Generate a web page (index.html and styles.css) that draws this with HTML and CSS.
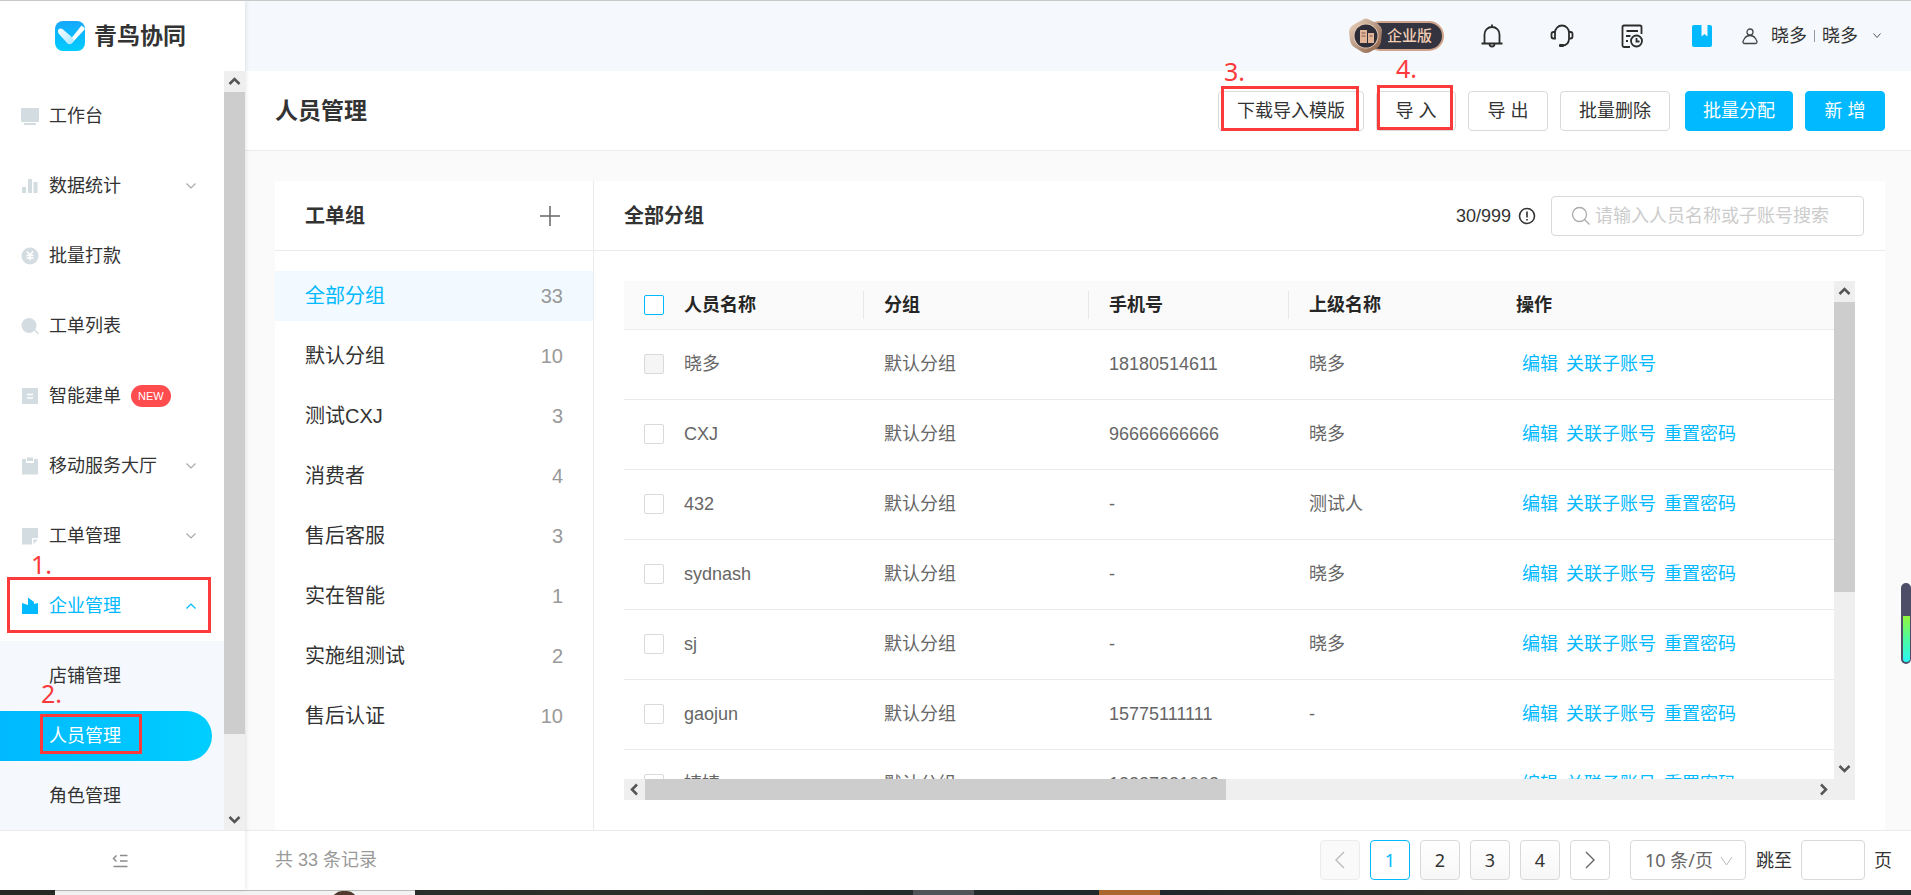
FILE: index.html
```html
<!DOCTYPE html>
<html lang="zh-CN">
<head>
<meta charset="utf-8">
<title>人员管理 - 青鸟协同</title>
<link rel="stylesheet" href="styles.css">
</head>
<body>
<div class="app">
  <aside class="sidebar">
    <div class="brand">
      <svg class="brand-logo" width="30" height="30" viewBox="0 0 30 30" aria-hidden="true">
        <defs>
          <linearGradient id="lg1" x1="0" y1="0" x2="0" y2="1"><stop offset="0" stop-color="#17a8fd"/><stop offset="1" stop-color="#00ccff"/></linearGradient>
          <linearGradient id="lg2" x1="0" y1="0" x2="1" y2="1"><stop offset="0" stop-color="#fff"/><stop offset="1" stop-color="#a8e6ff"/></linearGradient>
        </defs>
        <rect width="30" height="30" rx="8" fill="url(#lg1)"/>
        <path d="M13 21.500 26.500 4.500Q29 6 30 8L17.500 21.500Q15 24 13 21.500Z" fill="#fff"/>
        <path d="M3.500 8.500Q5.500 6.500 8 8.500L15 14.500 19 18.500 17 22Q15 24 12.500 22.500L4 13Q2 10.500 3.500 8.500Z" fill="url(#lg2)"/>
      </svg>
      <span class="brand-name">青鸟协同</span>
    </div>
    <div class="side-body">
      <nav class="menu">
        <a class="item" href="#"><svg class="mi" width="18" height="18" viewBox="0 0 18 18"><path d="M1 1h16q1 0 1 1v12q0 1-1 1H1q-1 0-1-1V2q0-1 1-1zM3 16h12v2H3z"/></svg><span>工作台</span></a>
        <a class="item" href="#"><svg class="mi" width="18" height="18" viewBox="0 0 18 18"><path d="M1 10h4v6H1zM7 2h4v14H7zM12.500 5h4v11h-4z"/></svg><span>数据统计</span><svg class="arrow" width="10" height="6" viewBox="0 0 10 6"><path d="M.5.5 5 5 9.500.5"/></svg></a>
        <a class="item" href="#"><svg class="mi" width="18" height="18" viewBox="0 0 18 18"><circle cx="9" cy="9" r="8.500"/><path class="cut" d="M6 4.500 9 8l3-3.500M5.500 8.500h7M5.500 11h7M9 8v5.500"/></svg><span>批量打款</span></a>
        <a class="item" href="#"><svg class="mi" width="18" height="18" viewBox="0 0 18 18"><circle cx="8" cy="8.500" r="7.500"/><path d="m13 13 1-1 4 4.500-1 1z"/></svg><span>工单列表</span></a>
        <a class="item" href="#"><svg class="mi" width="18" height="18" viewBox="0 0 18 18"><path d="M1 1h16v16H1z"/><path class="cut" d="M6 7.500h6M6 11h6"/></svg><span>智能建单</span><em class="tag">NEW</em></a>
        <a class="item" href="#"><svg class="mi" width="18" height="18" viewBox="0 0 18 18"><path d="M1 2h4v4h8V2h4v15.500H1zM6 0.500h6V4H6z"/></svg><span>移动服务大厅</span><svg class="arrow" width="10" height="6" viewBox="0 0 10 6"><path d="M.5.5 5 5 9.500.5"/></svg></a>
        <a class="item" href="#"><svg class="mi" width="18" height="18" viewBox="0 0 18 18"><path d="M1 1h16v10h-6v6.500H1zM12.500 12.500H17l-4.500 4.500z"/></svg><span>工单管理</span><svg class="arrow" width="10" height="6" viewBox="0 0 10 6"><path d="M.5.5 5 5 9.500.5"/></svg></a>
        <a class="item open" href="#"><svg class="mi" width="18" height="18" viewBox="0 0 18 18"><path d="M1 17V6l6 2V.5l6 4.500v2l4-1v11z"/></svg><span>企业管理</span><svg class="arrow" width="10" height="6" viewBox="0 0 10 6"><path d="M.5 5.500 5 1l4.500 4.500"/></svg><i class="mark mark-1"><b>1.</b></i></a>
        <div class="submenu">
          <a class="sub" href="#">店铺管理</a>
          <a class="sub current" href="#">人员管理<i class="mark mark-2"><b>2.</b></i></a>
          <a class="sub" href="#">角色管理</a>
        </div>
      </nav>
      <div class="vbar">
        <svg class="cap" width="21" height="21" viewBox="0 0 21 21"><path d="m5.500 13 5-5 5 5"/></svg>
        <div class="thumb side-thumb"></div>
        <svg class="cap cap-end" width="21" height="21" viewBox="0 0 21 21"><path d="m5.500 8 5 5 5-5"/></svg>
      </div>
    </div>
    <button class="fold" type="button" aria-label="收起菜单"><svg width="16" height="14" viewBox="0 0 16 14"><path d="M4.500 1.500 1.500 4.500l3 3M8 1.500h7.500M8 7h7.500M1.500 12.500h14"/></svg></button>
  </aside>

  <div class="main">
    <header class="topbar">
      <div class="edition">
        <svg class="medal" width="34" height="36" viewBox="0 0 34 36" aria-hidden="true">
          <defs>
            <linearGradient id="m1" x1="0" y1="0" x2="1" y2="1"><stop offset="0" stop-color="#f3d9c3"/><stop offset=".5" stop-color="#b79a86"/><stop offset="1" stop-color="#8c5a3e"/></linearGradient>
          </defs>
          <path d="M13 2q4-3 8 0l8 4q3 2 4 6l-1 12q-1 4-4 6l-7 4q-4 2-8 0l-8-5q-3-2-4-6L0 14q0-4 4-7z" fill="url(#m1)"/>
          <circle cx="17" cy="18" r="12.500" fill="#e8c9b2"/>
          <circle cx="17" cy="18" r="11.500" fill="#2d2e38"/>
          <path d="M11 12h7v13h-7zM19 15h6v10h-6z" fill="#e3b599"/>
          <path d="M12.500 15h4M12.500 18h4M20.500 18h3" stroke="#7d5746"/>
        </svg>
        <span class="edition-name">企业版</span>
      </div>
      <svg class="tool" width="24" height="24" viewBox="0 0 24 24"><path d="M1.500 19.500h21M4.500 19V10.500a7.500 7.500 0 0 1 15 0V19M12 3V.5M9.500 20a2.500 2.500 0 0 0 5 0"/></svg>
      <svg class="tool" width="24" height="24" viewBox="0 0 24 24"><path d="M5 8.500a7 7 0 0 1 14 0v6q0 7-7 7M5 8H3.500Q1.500 8 1.500 10v2.500q0 2 2 2H5zM19 8h1.500q2 0 2 2v2.500q0 2-2 2H19z"/><rect class="solid" x="9" y="20" width="5" height="3" rx="1"/></svg>
      <svg class="tool" width="24" height="24" viewBox="0 0 24 24"><path d="M21.500 10V3q0-1.500-1.500-1.500H4Q2.500 1.500 2.500 3v18.500Q2.500 23 4 23h6M6.500 7h11.500M6 12h4.500M6 17h2"/><circle cx="16.500" cy="17" r="5.500"/><path d="M16.500 14v3.500h3"/></svg>
      <svg class="book" width="20" height="22" viewBox="0 0 20 22"><path d="M2 0h7.500v11.500l3-2.500 3 2.500V0H18q2 0 2 2v18q0 2-2 2H2q-2 0-2-2V2q0-2 2-2z"/></svg>
      <button class="account" type="button">
        <svg class="user" width="16" height="17" viewBox="0 0 16 17"><circle cx="8" cy="4" r="3"/><path d="M8 7.500q3.500 0 5.500 3 1.500 2.500 1.500 3.500 0 1.500-1.500 1.500h-11Q1 15.500 1 14q0-1 1.500-3.500 2-3 5.500-3z"/></svg>
        <span>晓多</span><i class="bar"></i><span>晓多</span>
        <svg class="caret" width="8" height="6" viewBox="0 0 8 6"><path d="M.5.5 4 4.500 7.500.5"/></svg>
      </button>
    </header>

    <div class="titlebar">
      <h1>人员管理</h1>
      <div class="actions">
        <button class="btn" type="button">下载导入模版<i class="mark mark-3"><b>3.</b></i></button>
        <button class="btn" type="button">导 入<i class="mark mark-4"><b>4.</b></i></button>
        <button class="btn" type="button">导 出</button>
        <button class="btn last" type="button">批量删除</button>
        <button class="btn primary" type="button">批量分配</button>
        <button class="btn primary" type="button">新 增</button>
      </div>
    </div>

    <div class="content">
      <section class="groups">
        <div class="panel-head">
          <h2>工单组</h2>
          <button class="add" type="button" aria-label="新增工单组"><svg width="20" height="20" viewBox="0 0 20 20"><path d="M10 0v20M0 10h20"/></svg></button>
        </div>
        <ul class="group-list">
          <li class="selected"><span>全部分组</span><span class="num">33</span></li>
          <li><span>默认分组</span><span class="num">10</span></li>
          <li><span>测试CXJ</span><span class="num">3</span></li>
          <li><span>消费者</span><span class="num">4</span></li>
          <li><span>售后客服</span><span class="num">3</span></li>
          <li><span>实在智能</span><span class="num">1</span></li>
          <li><span>实施组测试</span><span class="num">2</span></li>
          <li><span>售后认证</span><span class="num">10</span></li>
        </ul>
      </section>

      <section class="people">
        <div class="panel-head people-head">
          <h2>全部分组</h2>
          <div class="quota"><span>30/999</span><svg width="18" height="18" viewBox="0 0 18 18"><circle cx="9" cy="9" r="7.500"/><path d="M9 4.500v6M9 12v1.500"/></svg></div>
          <label class="search">
            <svg width="20" height="20" viewBox="0 0 20 20"><circle cx="8.500" cy="8.500" r="7"/><path d="m13.500 13.500 5 5"/></svg>
            <input type="text" placeholder="请输入人员名称或子账号搜索" aria-label="搜索人员">
          </label>
        </div>
        <div class="table-area">
          <div class="viewport">
            <table>
              <colgroup><col class="c-check"><col class="c-name"><col class="c-group"><col class="c-phone"><col class="c-lead"><col></colgroup>
              <thead>
                <tr><th><input class="all" type="checkbox" aria-label="全选"></th><th class="sep">人员名称</th><th class="sep">分组</th><th class="sep">手机号</th><th>上级名称</th><th>操作</th></tr>
              </thead>
              <tbody>
                <tr><td><input type="checkbox" aria-label="晓多" disabled></td><td>晓多</td><td>默认分组</td><td>18180514611</td><td>晓多</td><td><div class="ops"><a href="#">编辑</a><a href="#">关联子账号</a></div></td></tr>
                <tr><td><input type="checkbox" aria-label="CXJ"></td><td>CXJ</td><td>默认分组</td><td>96666666666</td><td>晓多</td><td><div class="ops"><a href="#">编辑</a><a href="#">关联子账号</a><a href="#">重置密码</a></div></td></tr>
                <tr><td><input type="checkbox" aria-label="432"></td><td>432</td><td>默认分组</td><td>-</td><td>测试人</td><td><div class="ops"><a href="#">编辑</a><a href="#">关联子账号</a><a href="#">重置密码</a></div></td></tr>
                <tr><td><input type="checkbox" aria-label="sydnash"></td><td>sydnash</td><td>默认分组</td><td>-</td><td>晓多</td><td><div class="ops"><a href="#">编辑</a><a href="#">关联子账号</a><a href="#">重置密码</a></div></td></tr>
                <tr><td><input type="checkbox" aria-label="sj"></td><td>sj</td><td>默认分组</td><td>-</td><td>晓多</td><td><div class="ops"><a href="#">编辑</a><a href="#">关联子账号</a><a href="#">重置密码</a></div></td></tr>
                <tr><td><input type="checkbox" aria-label="gaojun"></td><td>gaojun</td><td>默认分组</td><td>15775111111</td><td>-</td><td><div class="ops"><a href="#">编辑</a><a href="#">关联子账号</a><a href="#">重置密码</a></div></td></tr>
                <tr><td><input type="checkbox" aria-label="婧婧"></td><td>婧婧</td><td>默认分组</td><td>13227221002</td><td></td><td><div class="ops"><a href="#">编辑</a><a href="#">关联子账号</a><a href="#">重置密码</a></div></td></tr>
              </tbody>
            </table>
          </div>
          <div class="vbar">
            <svg class="cap" width="21" height="21" viewBox="0 0 21 21"><path d="m5.500 13 5-5 5 5"/></svg>
            <div class="thumb table-thumb"></div>
            <svg class="cap cap-end" width="21" height="21" viewBox="0 0 21 21"><path d="m5.500 8 5 5 5-5"/></svg>
          </div>
          <div class="hbar">
            <svg class="cap" width="21" height="21" viewBox="0 0 21 21"><path d="m13 5.500-5 5 5 5"/></svg>
            <div class="thumb row-thumb"></div>
            <svg class="cap cap-right" width="21" height="21" viewBox="0 0 21 21"><path d="m8 5.500 5 5-5 5"/></svg>
          </div>
        </div>
      </section>
      <div class="gauge"></div>
    </div>

    <footer class="pager">
      <span class="total">共 33 条记录</span>
      <div class="pages">
        <button class="page prev" type="button" aria-label="上一页" disabled><svg width="10" height="18" viewBox="0 0 10 18"><path d="M9 1 1 9l8 8"/></svg></button>
        <button class="page on" type="button">1</button>
        <button class="page" type="button">2</button>
        <button class="page" type="button">3</button>
        <button class="page" type="button">4</button>
        <button class="page next" type="button" aria-label="下一页"><svg width="10" height="18" viewBox="0 0 10 18"><path d="m1 1 8 8-8 8"/></svg></button>
      </div>
      <div class="size">
        <select aria-label="每页条数"><option>10 条/页</option></select>
        <svg width="13" height="10" viewBox="0 0 13 10"><path d="m1 1 5.500 8L12 1"/></svg>
      </div>
      <label class="jump">跳至<input type="text"><span>页</span></label>
    </footer>
  </div>
</div>
<div class="dock"><i class="dock-start"></i><div class="dock-search"><i class="avatar"></i></div><div class="dock-apps"><i class="dock-a"></i><i class="dock-b"></i></div></div>
</body>
</html>
```

FILE: styles.css
```css
* { box-sizing: border-box; }

:root {
  --accent: #00b9ff;
  --line: #ebebeb;
  --ink: #333;
  --mark: #fb3a3c;
}

body {
  margin: 0;
  height: 100vh;
  display: flex;
  flex-direction: column;
  border-top: 1px solid #c9c9c9;
  color: var(--ink);
  font-family: "Liberation Sans", "Noto Sans CJK SC", sans-serif;
  font-size: 18px;
  line-height: 26px;
  overflow: hidden;
}

a { color: inherit; text-decoration: none; }
button, input, select { font: inherit; color: inherit; margin: 0; }
button { background: none; border: 0; padding: 0; }
svg { display: block; flex: none; }
i, em { font-style: normal; }
h1, h2 { margin: 0; color: var(--ink); font-weight: 700; }
h1 { font-size: 23px; }
h2 { font-size: 20px; }

.app { flex: 1; min-height: 0; display: flex; }

/* Sidebar */
.sidebar {
  width: 245px;
  flex: none;
  display: flex;
  flex-direction: column;
  background: #fff;
  box-shadow: 1px 0 4px rgba(0, 0, 0, .1);
  z-index: 1;
}
.brand {
  height: 70px;
  flex: none;
  display: flex;
  align-items: center;
  padding-left: 55px;
  gap: 9px;
}
.brand-name { font-size: 23px; font-weight: 700; }
.side-body { flex: 1; min-height: 0; display: flex; }
.menu { flex: 1; padding-top: 10px; display: flex; flex-direction: column; }
.item {
  position: relative;
  height: 70px;
  flex: none;
  display: flex;
  align-items: center;
  padding: 0 28px 0 21px;
  gap: 10px;
}
.mi { fill: #d3dce1; }
.mi .cut { fill: none; stroke: #fff; stroke-width: 1.5; }
.arrow { margin-left: auto; fill: none; stroke: #aaa; stroke-width: 1.2; }
.open { color: var(--accent); }
.open .mi { fill: var(--accent); }
.open .arrow { stroke: var(--accent); }
.tag {
  padding: 0 7px;
  border-radius: 11px;
  background: #ff4d4f;
  color: #fff;
  font-size: 11px;
  line-height: 22px;
}
.submenu {
  flex: 1;
  padding: 10px 12px 0 0;
  display: flex;
  flex-direction: column;
  gap: 10px;
  background: #f5f9fd;
}
.sub {
  position: relative;
  height: 50px;
  flex: none;
  display: flex;
  align-items: center;
  padding-left: 49px;
  border-radius: 0 25px 25px 0;
}
.current { color: #fff; background: linear-gradient(90deg, #00b9ff, #00ceff); }
.fold {
  height: 60px;
  flex: none;
  display: flex;
  align-items: center;
  justify-content: center;
  padding-right: 5px;
  border-top: 1px solid var(--line);
}
.fold svg { fill: none; stroke: #8c8c8c; stroke-width: 1.5; }

/* Scrollbars */
.vbar { width: 21px; flex: none; display: flex; flex-direction: column; background: #efefef; }
.hbar { height: 21px; display: flex; background: #efefef; }
.cap { fill: none; stroke: #555; stroke-width: 2.5; }
.cap-end { margin-top: auto; }
.cap-right { margin-left: auto; margin-right: 21px; }
.thumb { background: #cdcdcd; }
.side-thumb { height: 90%; max-height: 642px; }
.table-thumb { height: 290px; }
.row-thumb { width: 47.2%; }

/* Top bar */
.main { flex: 1; min-width: 0; display: flex; flex-direction: column; background: #fafafa; }
.topbar {
  height: 70px;
  flex: none;
  display: flex;
  align-items: center;
  justify-content: flex-end;
  padding-right: 30px;
  background: #f5f9fd;
}
.edition { position: relative; display: flex; align-items: center; margin-right: 36px; }
.medal { position: relative; z-index: 1; margin-right: -18px; }
.edition-name {
  padding: 0 10px 0 20px;
  border: 2px solid #cfa48a;
  border-radius: 15px;
  background: #33343f;
  color: #f2cdb4;
  font-size: 15px;
  font-weight: 500;
  line-height: 26px;
}
.tool { margin-right: 46px; fill: none; stroke: #2c2c2c; stroke-width: 1.8; }
.book { margin: 0 30px 0 2px; fill: var(--accent); }
.tool .solid { fill: #2c2c2c; stroke: none; }
.account { display: flex; align-items: center; }
.user { margin-right: 13px; fill: none; stroke: #444; stroke-width: 1.3; }
.bar { width: 1px; height: 12px; margin: 0 7px; background: #999; }
.caret { margin-left: 15px; fill: none; stroke: #555; }

/* Page title and actions */
.titlebar {
  height: 80px;
  flex: none;
  display: flex;
  align-items: center;
  justify-content: space-between;
  padding: 0 26px 0 30px;
  border-bottom: 1px solid var(--line);
  background: #fff;
}
.actions { display: flex; gap: 12px; }
.btn {
  position: relative;
  height: 40px;
  min-width: 80px;
  padding: 0 18px;
  border: 1px solid #d9d9d9;
  border-radius: 4px;
  background: #fff;
}
.last { margin-right: 3px; }
.primary { padding: 0 17px; border-color: var(--accent); background: var(--accent); color: #fff; }

/* Content panels */
.content { position: relative; flex: 1; min-height: 0; display: flex; padding: 30px 26px 0 30px; }
.groups { width: 319px; flex: none; background: #fff; border-right: 1px solid var(--line); }
.people { flex: 1; min-width: 0; display: flex; flex-direction: column; background: #fff; }
.panel-head {
  height: 70px;
  flex: none;
  display: flex;
  align-items: center;
  justify-content: space-between;
  padding: 0 33px 0 30px;
  border-bottom: 1px solid var(--line);
}
.add svg { stroke: #666; stroke-width: 1.5; }
.group-list {
  margin: 0;
  padding: 20px 0 0;
  list-style: none;
  display: flex;
  flex-direction: column;
  gap: 10px;
  font-size: 20px;
}
.group-list li { height: 50px; display: flex; align-items: center; justify-content: space-between; padding: 0 30px; }
.group-list .selected { color: var(--accent); background: #f2faff; }
.num { color: #999; }
.people-head { padding-right: 21px; }
.quota { display: flex; align-items: center; gap: 7px; margin-left: auto; margin-right: 15px; }
.quota svg { fill: none; stroke: #333; stroke-width: 1.6; }
.search {
  width: 313px;
  height: 40px;
  display: flex;
  align-items: center;
  gap: 4px;
  padding: 0 18px 0 19px;
  border: 1px solid #d9d9d9;
  border-radius: 4px;
}
.search svg { fill: none; stroke: #aaa; stroke-width: 1.3; }
.search input { flex: 1; min-width: 0; padding: 0; border: 0; outline: 0; background: none; }
.search input::placeholder { color: #ccc; }

/* People table */
.table-area {
  flex: 1;
  min-height: 0;
  display: grid;
  grid-template-columns: minmax(0, 1fr) 21px;
  grid-template-rows: minmax(0, 1fr) 21px;
  margin: 30px;
}
.viewport { overflow: hidden; }
.hbar { grid-column: 1 / 3; }
table { width: 100%; border-collapse: separate; border-spacing: 0; table-layout: fixed; color: #666; }
.c-check { width: 40px; }
.c-name, .c-phone { width: 200px; }
.c-group { width: 225px; }
.c-lead { width: 207px; }
th, td { padding: 0 0 0 20px; text-align: left; border-bottom: 1px solid var(--line); white-space: nowrap; }
th { height: 49px; background: #fafafa; color: #262626; font-weight: 700; }
td { height: 70px; padding-bottom: 2px; }
.sep { background: linear-gradient(#e8e8e8, #e8e8e8) right center / 1px 28px no-repeat #fafafa; }
input[type="checkbox"] {
  appearance: none;
  display: block;
  width: 20px;
  height: 20px;
  border: 1px solid #d9d9d9;
  border-radius: 2px;
  background: #fff;
}
input[type="checkbox"].all { border-color: var(--accent); }
input[type="checkbox"]:disabled { background: #f5f5f5; }
.ops { display: flex; gap: 8px; padding-left: 6px; color: var(--accent); }

/* Edge gauge */
.gauge {
  position: absolute;
  right: 0;
  top: 432px;
  width: 10px;
  height: 81px;
  border: 2px solid #4d4d68;
  border-right-width: 1px;
  border-radius: 6px;
  background: linear-gradient(#4d4d68 40%, #93f53a 40%, #4dfba0 70%, #2af5f5);
}

/* Footer */
.pager {
  height: 60px;
  flex: none;
  display: flex;
  align-items: center;
  padding: 0 19px 2px 30px;
  border-top: 1px solid var(--line);
  background: #fff;
  font-family: "Noto Sans", "Noto Sans CJK SC", sans-serif;
}
.total { margin-right: auto; color: #999; font-family: "Liberation Sans", "Noto Sans CJK SC", sans-serif; }
.pages { display: flex; gap: 10px; }
.page {
  width: 40px;
  height: 40px;
  display: flex;
  align-items: center;
  justify-content: center;
  border: 1px solid #d9d9d9;
  border-radius: 4px;
  background: linear-gradient(#fff, #f7f7f7);
}
.page svg { fill: none; stroke: #666; stroke-width: 1.4; }
.next { background: #fff; }
.prev { border-color: #ececec; background: #fafafa; }
.prev svg { stroke: #bbb; }
.on { border-color: var(--accent); background: #fff; color: var(--accent); }
.size { position: relative; width: 116px; margin: 0 10px 0 20px; }
.size select {
  appearance: none;
  width: 100%;
  height: 40px;
  padding: 0 0 0 14px;
  border: 1px solid #d9d9d9;
  border-radius: 4px;
  background: #fff;
  color: #666;
}
.size svg { position: absolute; right: 13px; top: 16px; fill: none; stroke: #bbb; pointer-events: none; }
.jump { display: flex; align-items: center; gap: 9px; }
.jump input { width: 64px; height: 40px; border: 1px solid #d9d9d9; border-radius: 4px; }

/* Numbered step marks */
.mark { position: absolute; border: 3px solid var(--mark); pointer-events: none; }
.mark b {
  position: absolute;
  color: var(--mark);
  font: 400 25px/24px "Noto Sans", sans-serif;
}
.mark-1 { left: 7px; top: 6px; width: 204px; height: 56px; }
.mark-1 b { left: 21px; top: -28px; }
.mark-2 { left: 40px; top: 3px; width: 102px; height: 40px; }
.mark-2 b { left: -2px; top: -36px; }
.mark-3 { left: 2px; right: 4px; top: -6px; height: 45px; }
.mark-3 b { left: 0; top: -30px; }
.mark-4 { left: 0; right: 2px; top: -7px; height: 45px; }
.mark-4 b { left: 16px; top: -32px; }

/* Desktop taskbar edge */
.dock { height: 5px; flex: none; display: flex; overflow: hidden; background: linear-gradient(90deg, #22292b, #2b3029 30%, #1f282b 60%, #33302a 80%, #2a2f30); }
.dock-start { width: 55px; background: #262b26; }
.dock-search { width: 360px; display: flex; padding-left: 277px; background: #f2f2f2; border-top: 1px solid #b9bcb9; }
.avatar { width: 25px; height: 12px; border-radius: 10px 10px 0 0; background: #4f3a2d; }
.dock-apps { display: flex; gap: 125px; padding-left: 498px; }
.dock-a, .dock-b { width: 61px; background: #505456; }
.dock-b { background: #aa662c; }
```
